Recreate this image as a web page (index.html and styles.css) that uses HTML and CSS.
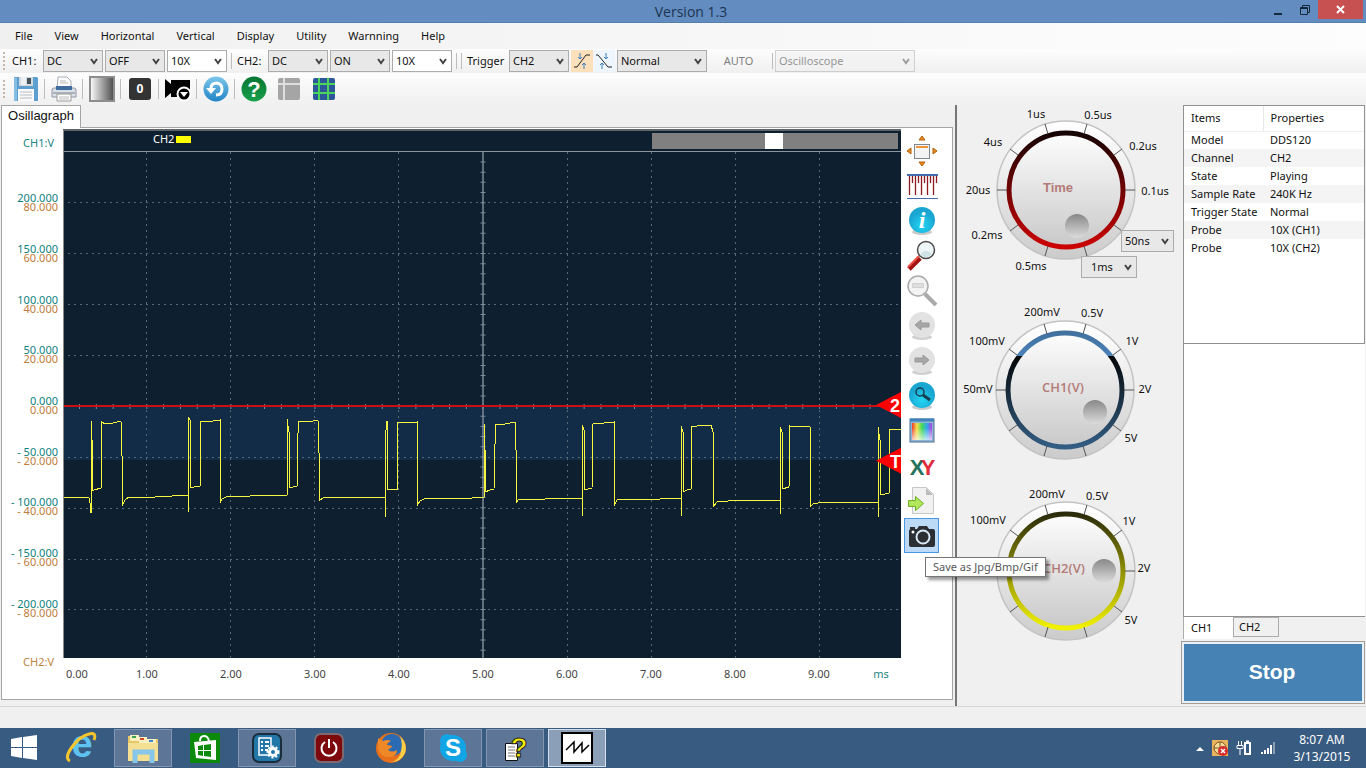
FILE: index.html
```html
<!DOCTYPE html>
<html lang="en">
<head>
    <meta charset="UTF-8">
    <meta name="viewport" content="width=device-width, initial-scale=1.0">
    <title>Version 1.3</title>
    <link rel="stylesheet" href="styles.css">
</head>
<body>
    <header class="titlebar">
        <h1>Version 1.3</h1>
        <div class="window-controls">
            <button aria-label="Minimize"><svg width="12" height="12"><path d="M2 10h8" stroke="#14283c" stroke-width="2"/></svg></button>
            <button aria-label="Restore"><svg width="12" height="12" fill="none" stroke="#14283c"><path d="M1.5 3.500h7v7h-7zM1 4.500h8M3.500 3V1.500h7v7H9"/></svg></button>
            <button class="close-btn" aria-label="Close"><svg width="10" height="10"><path d="M1 1l7 7M8 1l-7 7" stroke="#fff" stroke-width="2"/></svg></button>
        </div>
    </header>

    <nav class="menu">
        <button>File</button>
        <button>View</button>
        <button>Horizontal</button>
        <button>Vertical</button>
        <button>Display</button>
        <button>Utility</button>
        <button>Warnning</button>
        <button>Help</button>
    </nav>

    <div class="toolbar channel-bar">
        <span class="grip"></span>
        <label for="ch1-coupling">CH1:</label>
        <select id="ch1-coupling"><option>DC</option><option>AC</option></select>
        <select aria-label="CH1 state"><option>OFF</option><option>ON</option></select>
        <select class="editable" aria-label="CH1 probe"><option>10X</option><option>1X</option></select>
        <span class="sep"></span>
        <label for="ch2-coupling">CH2:</label>
        <select id="ch2-coupling"><option>DC</option><option>AC</option></select>
        <select aria-label="CH2 state"><option>ON</option><option>OFF</option></select>
        <select class="editable" aria-label="CH2 probe"><option>10X</option><option>1X</option></select>
        <span class="sep"></span>
        <span class="sep"></span>
        <label for="trigger">Trigger</label>
        <select id="trigger"><option>CH2</option><option>CH1</option></select>
        <div class="edges">
            <button class="edge active" aria-label="Rising edge">
                <svg width="18" height="18" fill="none"><path d="M1 15h3l9-12h4" stroke="#222"/><path d="M7 1v6M5 5l2 2 2-2M11 17v-6M9 13l2-2 2 2" stroke="#3d7dbd"/></svg>
            </button>
            <button class="edge" aria-label="Falling edge">
                <svg width="18" height="18" fill="none"><path d="M1 3h2l10 12h4" stroke="#222"/><path d="M11 1v6M9 5l2 2 2-2M7 17v-6M5 13l2-2 2 2" stroke="#3d7dbd"/></svg>
            </button>
        </div>
        <select class="medium" aria-label="Trigger mode"><option>Normal</option><option>Auto</option></select>
        <button class="auto-btn" disabled>AUTO</button>
        <span class="sep"></span>
        <select class="wide" aria-label="Device mode" disabled><option>Oscilloscope</option></select>
    </div>

    <div class="toolbar icon-bar">
        <span class="grip"></span>
        <button aria-label="Save">
            <svg width="26" height="26"><path d="M1 2q0-1 1-1h22l1 1v23H1z" fill="#5c9fd0"/><path d="M1 2h3v23H1z" fill="#86bde3"/><path d="M6 1h14v9H6z" fill="#d3dadf"/><path d="M8 1h5v8H8z" fill="#eef1f3"/><path d="M14 2h4v6h-4z" fill="#46525c"/><path d="M5 13h16v12H5z" fill="#fafafa"/><path d="M7 16h12M7 19h12M7 22h12" stroke="#b6bcc2"/></svg>
        </button>
        <span class="sep"></span>
        <button aria-label="Print">
            <svg width="26" height="26"><path d="M7 1h9l4 4v8H6z" fill="#fbfbfb" stroke="#a9b0b8"/><path d="M9 5h6M9 7h8" stroke="#bbb"/><path d="M1 14q0-2 2-2h20q2 0 2 2v7H1z" fill="#dadfe5" stroke="#8f98a3"/><path d="M5 10h16v4H5z" fill="#3f6d9d"/><path d="M2 17h22" stroke="#7d8794"/><path d="M6 18h14v7H6z" fill="#fff" stroke="#999"/><path d="M8 21h10M8 23h10" stroke="#bbb"/></svg>
        </button>
        <span class="sep"></span>
        <button aria-label="Intensity">
            <svg width="26" height="26"><defs><linearGradient id="gray"><stop offset="0" stop-color="#fff"/><stop offset="1" stop-color="#4a4a4a"/></linearGradient></defs><rect x="1" y="1" width="24" height="24" fill="url(#gray)" stroke="#8d8d8d" stroke-width="2"/></svg>
        </button>
        <span class="sep"></span>
        <button class="zero-btn"><span>0</span></button>
        <span class="sep"></span>
        <button aria-label="Record">
            <svg width="26" height="26"><path d="M0 3l6 5V4h19v17H6v-4l-6 5z" fill="#000"/><circle cx="19" cy="18" r="6.500" fill="#000" stroke="#fff" stroke-width="2"/><path d="M15 16h8l-4 5z" fill="#fff"/></svg>
        </button>
        <span class="sep"></span>
        <button aria-label="Undo">
            <svg width="26" height="26"><defs><linearGradient id="sky" x2="0" y2="1"><stop offset="0" stop-color="#7cc7ea"/><stop offset="1" stop-color="#2384c6"/></linearGradient></defs><circle cx="13" cy="13" r="12.500" fill="url(#sky)"/><path d="M8 12q0-5 6-5 5 1 5 6 0 6-6 6" fill="none" stroke="#fff" stroke-width="3"/><path d="M3 12h10l-5 6z" fill="#fff"/></svg>
        </button>
        <span class="sep"></span>
        <button aria-label="Help">
            <svg width="26" height="26"><defs><linearGradient id="green" x2="0" y2="1"><stop offset="0" stop-color="#087533"/><stop offset="1" stop-color="#18a04a"/></linearGradient></defs><circle cx="13" cy="13" r="12.500" fill="url(#green)"/><text class="glyph help" x="13" y="21">?</text></svg>
        </button>
        <button class="spaced" aria-label="Table">
            <svg width="26" height="26"><rect x="2" y="2" width="22" height="22" rx="2" fill="#a5a5a5"/><path d="M2 8h22M8 2v22" stroke="#dedede" stroke-width="2"/></svg>
        </button>
        <button class="spaced" aria-label="Grid">
            <svg width="26" height="26"><rect x="2" y="2" width="22" height="22" rx="2" fill="#2c5799"/><path d="M2 8h22M2 17h22M8 2v22M17 2v22" stroke="#4bd45a" stroke-width="2"/></svg>
        </button>
    </div>

    <main>
        <section class="scope">
            <div class="tabs"><button class="tab active">Osillagraph</button></div>
            <div class="pane">
                <div class="y-axis">
                    <span class="axis-name ch1">CH1:V</span>
                    <ul>
                        <li><span>200.000</span><span>80.000</span></li>
                        <li><span>150.000</span><span>60.000</span></li>
                        <li><span>100.000</span><span>40.000</span></li>
                        <li><span>50.000</span><span>20.000</span></li>
                        <li><span>0.000</span><span>0.000</span></li>
                        <li><span>- 50.000</span><span>- 20.000</span></li>
                        <li><span>- 100.000</span><span>- 40.000</span></li>
                        <li><span>- 150.000</span><span>- 60.000</span></li>
                        <li><span>- 200.000</span><span>- 80.000</span></li>
                    </ul>
                    <span class="axis-name ch2">CH2:V</span>
                </div>
                <div class="plot">
                    <div class="plot-head">
                        <span>CH2</span><i class="swatch"></i>
                        <div class="position"><div class="thumb"></div></div>
                    </div>
                    <div class="screen">
                        <svg viewBox="64 152 837 506" preserveAspectRatio="none">
                            <rect x="64" y="406" width="837" height="54" fill="#122b47"/>
                            <g stroke="#586876" stroke-dasharray="2 4" shape-rendering="crispEdges">
                                <path d="M68 202.500H901M68 253.500H901M68 304.500H901M68 355.500H901M68 457.500H901M68 508.500H901M68 559.500H901M68 609.500H901"/>
                                <path d="M146.500 152V658M230.500 152V658M314.500 152V658M398.500 152V658M567.500 152V658M651.500 152V658M735.500 152V658M819.500 152V658"/>
                            </g>
                            <!-- centre axes, the thick dashed strokes are the ticks -->
                            <g stroke="#7f8b96">
                                <path d="M483 152V658" stroke-width="1.500"/>
                                <path d="M483 161.500V658" stroke-width="5" stroke-dasharray="1 9.170"/>
                                <path d="M64 406.500H901"/>
                                <path d="M79 406.500H901" stroke-width="5" stroke-dasharray="1 15.820"/>
                            </g>
                            <rect x="64" y="405" width="837" height="2" fill="#cc0f16"/>
                            <path class="trace" d="M64 497L68 498 84 497 89 498 90 503 91 513 91 421 92 440 92 491 94 490 101 488 101 421 105 424 113 423 121 421 122 456 122 506 125 500 129 497 155 497 160 496 172 496 188 495 188 512 188 417 190 420 190 488 194 487 200 486 200 421 207 422 213 421 220 420 220 503 222 499 226 497 250 496 287 495 287 419 289 432 289 488 293 487 297 486 297 445 299 421 308 422 318 420 319 453 319 501 323 498 330 497 385 497 385 517 385 440 387 421 387 489 397 489 397 423 417 422 417 506 420 501 424 499 440 498 460 499 484 497 484 424 485 450 485 492 490 490 494 489 495 444 496 424 505 424 515 422 516 450 516 503 518 500 530 499 545 499 560 498 582 498 582 516 582 425 584 430 584 490 588 489 592 488 593 424 604 423 614 422 614 506 617 500 630 499 660 499 681 498 681 516 681 426 683 432 683 492 687 490 691 489 691 427 704 425 711 425 713 432 713 456 714 506 717 502 740 500 780 500 780 514 780 427 782 432 782 489 789 487 790 426 810 427 810 507 813 504 818 503 840 502 878 502 878 517 878 427 880 440 880 494 885 494 889 493 889 429 901 430"/>
                        </svg>
                        <div class="marker level"><span>2</span></div>
                        <div class="marker trigger"><span>T</span></div>
                    </div>
                </div>
                <div class="side-tools">
                    <button aria-label="Fit">
                        <svg width="32" height="32"><g fill="#e98a1c" stroke="#b4610a"><path d="M13 5l3-4 3 4zM13 27l3 4 3-4zM5 13l-4 3 4 3zM27 13l4 3-4 3z"/></g><rect x="8.500" y="9.500" width="15" height="14" fill="#f3f3f3" stroke="#7f8791"/><path d="M10 12h12" stroke="#ec9740" stroke-width="2"/></svg>
                    </button>
                    <button aria-label="Ruler">
                        <svg width="32" height="32"><path d="M1 5h31" stroke="#426daf" stroke-width="2"/><path d="M1 28.500h31" stroke="#426daf"/><path d="M3.500 6v19M9.500 6v19M15.500 6v19M21.500 6v19M27.500 6v19M6.500 6v7M12.500 6v7M18.500 6v7M24.500 6v7M30.500 6v7" stroke="#8c1a1f" stroke-width="1.300"/></svg>
                    </button>
                    <button aria-label="Info">
                        <svg width="32" height="32"><defs><radialGradient id="cyan" cy=".7"><stop offset="0" stop-color="#22d6f2"/><stop offset="1" stop-color="#1ba6d2"/></radialGradient></defs><ellipse cx="16" cy="27" rx="10" ry="3" fill="#c9c9c9"/><circle cx="16" cy="15" r="13" fill="url(#cyan)"/><text class="glyph info-i" x="16" y="23">i</text></svg>
                    </button>
                    <button aria-label="Zoom in">
                        <svg width="32" height="32"><path d="M3 29l11-11" stroke="#a31313" stroke-width="5"/><path d="M2 27l11-11" stroke="#ef5148" stroke-width="2"/><circle cx="20" cy="10" r="8.500" fill="#edf5f6" stroke="#4a4a4a" stroke-width="1.500"/><ellipse cx="20" cy="14" rx="5" ry="3" fill="#cfe3e6"/></svg>
                    </button>
                    <button aria-label="Zoom out" disabled>
                        <svg width="32" height="32"><path d="M19 19l11 11" stroke="#aaa" stroke-width="4"/><circle cx="12" cy="11" r="10" fill="#f3f3f3" stroke="#aaa" stroke-width="1.500"/><path d="M6.500 8.500h11v4h-11z" fill="#dedede" stroke="#d0d0d0"/></svg>
                    </button>
                    <button aria-label="Back" disabled>
                        <svg width="32" height="32"><ellipse cx="16" cy="27" rx="10" ry="3" fill="#d0d0d0"/><circle cx="16" cy="15" r="13" fill="#e2e2e2"/><path d="M9 15l6-5v3h8v4h-8v3z" fill="#a6a6a6" stroke="#999"/></svg>
                    </button>
                    <button aria-label="Forward" disabled>
                        <svg width="32" height="32"><ellipse cx="16" cy="27" rx="10" ry="3" fill="#d0d0d0"/><circle cx="16" cy="15" r="13" fill="#e2e2e2"/><path d="M23 15l-6-5v3H9v4h8v3z" fill="#a6a6a6" stroke="#999"/></svg>
                    </button>
                    <button aria-label="Search">
                        <svg width="32" height="32"><ellipse cx="16" cy="27" rx="10" ry="3" fill="#c9c9c9"/><circle cx="16" cy="15" r="13" fill="url(#cyan)"/><circle cx="14" cy="12" r="4" fill="none" stroke="#153f52" stroke-width="1.500"/><path d="M17 15l7 5" stroke="#153f52" stroke-width="3"/></svg>
                    </button>
                    <button aria-label="Colors">
                        <svg width="32" height="32"><defs><linearGradient id="hue"><stop offset="0" stop-color="#f03a2c"/><stop offset=".25" stop-color="#f3e34a"/><stop offset=".5" stop-color="#42d75c"/><stop offset=".75" stop-color="#2fa8ef"/><stop offset="1" stop-color="#b142dc"/></linearGradient><linearGradient id="glow" x2="0" y2="1"><stop offset=".3" stop-color="#fff" stop-opacity="0"/><stop offset="1" stop-color="#fff" stop-opacity=".7"/></linearGradient></defs><rect x="4" y="4" width="24" height="23" fill="#8fb4d6" stroke="#4e7292"/><path d="M4 5h24" stroke="#3f83bd" stroke-width="3"/><rect x="6" y="8" width="20" height="17" fill="url(#hue)"/><rect x="6" y="8" width="20" height="17" fill="url(#glow)"/></svg>
                    </button>
                    <button aria-label="XY mode">
                        <svg width="32" height="32"><text class="glyph xy" x="11" y="25" fill="#25735c">X</text><text class="glyph xy" x="22" y="25" fill="#e32c3b">Y</text></svg>
                    </button>
                    <button aria-label="Export">
                        <svg width="32" height="32"><path d="M6.500 2.500h14l7 7v19h-21z" fill="#f1f1f1" stroke="#c6c6c6"/><path d="M20 3l7 7h-7z" fill="#bbb"/><path d="M2.500 15.500h7v-4l8 7-8 7v-4h-7z" fill="#b3e65a" stroke="#6bb022"/></svg>
                    </button>
                    <button class="selected" aria-label="Screenshot">
                        <svg width="32" height="32"><path d="M5 9q-2 0-2 2v14q0 2 2 2h22q2 0 2-2V11q0-2-2-2h-4l-2-3h-8l-2 3z" fill="#2b2f33"/><path d="M4 7h5v2H4z" fill="#2b2f33"/><circle cx="17" cy="17" r="6.500" fill="#2b2f33" stroke="#d9e8f7" stroke-width="2"/><circle cx="7" cy="12" r="1.500" fill="#fff"/></svg>
                        <span class="tooltip">Save as Jpg/Bmp/Gif</span>
                    </button>
                </div>
                <ul class="x-axis">
                    <li>0.00</li>
                    <li>1.00</li>
                    <li>2.00</li>
                    <li>3.00</li>
                    <li>4.00</li>
                    <li>5.00</li>
                    <li>6.00</li>
                    <li>7.00</li>
                    <li>8.00</li>
                    <li>9.00</li>
                    <li class="unit">ms</li>
                </ul>
            </div>
        </section>

        <section class="dials">
            <div class="dial dial-time">
                <svg viewBox="0 0 224 180">
                    <defs>
                        <linearGradient id="rim" x2="0" y2="1"><stop offset="0" stop-color="#fff"/><stop offset=".3" stop-color="#f2f2f2"/><stop offset="1" stop-color="#cbcbcb"/></linearGradient>
                        <linearGradient id="face" x2="0" y2="1"><stop offset="0" stop-color="#fdfdfd"/><stop offset="1" stop-color="#c9c9c9"/></linearGradient>
                        <linearGradient id="dimple" x2="0" y2="1"><stop offset="0" stop-color="#888"/><stop offset="1" stop-color="#dcdcdc"/></linearGradient>
                        <linearGradient id="red" x2="0" y2="1"><stop offset="0" stop-color="#160404"/><stop offset="1" stop-color="#cc0202"/></linearGradient>
                        <linearGradient id="blue" x2="0" y2="1"><stop offset="0" stop-color="#41719f"/><stop offset=".2" stop-color="#4a81b8"/><stop offset=".2" stop-color="#050708"/><stop offset="1" stop-color="#335d83"/></linearGradient>
                        <linearGradient id="yellow" x2="0" y2="1"><stop offset="0" stop-color="#2b2b0c"/><stop offset="1" stop-color="#f2f200"/></linearGradient>
                        <g id="ticks" stroke="#555">
                            <path d="M59 0h10M-59 0h-10M48 35l8 6M-48 35l-8 6M48-35l8-6M-48-35l-8-6M18 56l3 10M-18 56l-3 10M18-56l3-10M-18-56l-3-10"/>
                        </g>
                    </defs>
                    <g transform="translate(109 85)">
                        <circle r="69" fill="url(#rim)" stroke="#c3c3c3" stroke-width="1.500"/>
                        <circle r="57" fill="url(#face)" stroke="url(#red)" stroke-width="5"/>
                        <use href="#ticks"/>
                        <circle cx="11" cy="36" r="12" fill="url(#dimple)"/>
                    </g>
                    <text class="dial-name" x="101" y="87">Time</text>
                    <text x="79" y="13">1us</text>
                    <text x="141" y="14">0.5us</text>
                    <text x="186" y="45">0.2us</text>
                    <text x="198" y="90">0.1us</text>
                    <text x="36" y="41">4us</text>
                    <text x="21" y="89">20us</text>
                    <text x="30" y="134">0.2ms</text>
                    <text x="74" y="165">0.5ms</text>
                </svg>
                <select class="fine" aria-label="Fast time base"><option>50ns</option></select>
                <select class="coarse" aria-label="Slow time base"><option>1ms</option></select>
            </div>
            <div class="dial">
                <svg viewBox="0 0 224 180">
                    <g transform="translate(108 85)">
                        <circle r="69" fill="url(#rim)" stroke="#c3c3c3" stroke-width="1.500"/>
                        <circle r="57" fill="url(#face)" stroke="url(#blue)" stroke-width="5"/>
                        <use href="#ticks"/>
                        <circle cx="30" cy="22" r="12" fill="url(#dimple)"/>
                    </g>
                    <text class="dial-name volts" x="106" y="87">CH1(V)</text>
                    <text x="85" y="11">200mV</text>
                    <text x="135" y="12">0.5V</text>
                    <text x="175" y="40">1V</text>
                    <text x="188" y="88">2V</text>
                    <text x="174" y="137">5V</text>
                    <text x="30" y="40">100mV</text>
                    <text x="21" y="88">50mV</text>
                </svg>
            </div>
            <div class="dial">
                <svg viewBox="0 0 224 180">
                    <g transform="translate(109 85)">
                        <circle r="69" fill="url(#rim)" stroke="#c3c3c3" stroke-width="1.500"/>
                        <circle r="57" fill="url(#face)" stroke="url(#yellow)" stroke-width="5"/>
                        <use href="#ticks"/>
                        <circle cx="38" cy="0" r="12" fill="url(#dimple)"/>
                    </g>
                    <text class="dial-name volts" x="107" y="87">CH2(V)</text>
                    <text x="90" y="12">200mV</text>
                    <text x="140" y="14">0.5V</text>
                    <text x="172" y="39">1V</text>
                    <text x="187" y="86">2V</text>
                    <text x="174" y="138">5V</text>
                    <text x="31" y="38">100mV</text>
                </svg>
            </div>
        </section>

        <aside class="info">
            <div class="props">
                <table>
                    <thead><tr><th>Items</th><th>Properties</th></tr></thead>
                    <tbody>
                        <tr><td>Model</td><td>DDS120</td></tr>
                        <tr><td>Channel</td><td>CH2</td></tr>
                        <tr><td>State</td><td>Playing</td></tr>
                        <tr><td>Sample Rate</td><td>240K Hz</td></tr>
                        <tr><td>Trigger State</td><td>Normal</td></tr>
                        <tr><td>Probe</td><td>10X (CH1)</td></tr>
                        <tr><td>Probe</td><td>10X (CH2)</td></tr>
                    </tbody>
                </table>
            </div>
            <div class="measure"></div>
            <div class="measure-tabs">
                <button class="active">CH1</button>
                <button>CH2</button>
            </div>
            <button class="stop-btn">Stop</button>
        </aside>
    </main>

    <div class="statusbar"></div>

    <footer class="taskbar">
        <button class="start" aria-label="Start">
            <svg width="28" height="28" fill="#fff"><path d="M1 5l11-2v10H1zM13 3l14-2v12H13zM1 14h11v10L1 22zM13 14h14v12l-14-2z"/></svg>
        </button>
        <button aria-label="Internet Explorer">
            <svg width="32" height="38"><text class="glyph ie" x="17" y="28">e</text><path d="M5 32q-6-3 2-14T24 5q8-2 5 6" fill="none" stroke="#f4c52c" stroke-width="3"/></svg>
        </button>
        <button class="open" aria-label="File Explorer">
            <svg width="34" height="32"><path d="M2 4h8l2 3h20v22H2z" fill="#e7c766"/><path d="M4 3h9v6H4zM13 5h8v6h-8zM21 7h9v6h-9z" fill="#fbf1c0"/><path d="M6 4h4v2H6z" fill="#3fa34d"/><path d="M14 6h4v2h-4z" fill="#d5472f"/><path d="M23 8h4v2h-4z" fill="#3f86cf"/><path d="M2 11h30v18H2z" fill="#f5df92"/><path d="M9 31V20h17v11" fill="none" stroke="#86c6e8" stroke-width="5"/></svg>
        </button>
        <button aria-label="Store">
            <svg width="32" height="32"><rect x="1" y="1" width="30" height="30" fill="#0b8a0b"/><path d="M5 10l22-2v20L7 26z" fill="#fff"/><path d="M11 9q0-5 4-5t5 5" fill="none" stroke="#fff" stroke-width="2"/><path d="M9 14l5-1v5H9zM15 13l7-1v6h-7zM9 19h5v5l-5-1zM15 19h7v6l-7-1z" fill="#0b8a0b"/></svg>
        </button>
        <button class="open" aria-label="Settings">
            <svg width="32" height="32"><rect x="2" y="2" width="28" height="28" rx="6" fill="#2277a8" stroke="#1b2d3c" stroke-width="2"/><path d="M8 6h12v17H8z" fill="none" stroke="#fff" stroke-width="1.500"/><path d="M10 10h2M14 10h4M10 14h2M14 14h4M10 18h2M14 18h3" stroke="#fff" stroke-width="2"/><circle cx="22" cy="20" r="3.500" fill="#2277a8" stroke="#fff" stroke-width="3"/><circle cx="22" cy="20" r="5.500" fill="none" stroke="#fff" stroke-width="2" stroke-dasharray="2 2"/></svg>
        </button>
        <button aria-label="Power">
            <svg width="32" height="32" fill="none"><rect x="2" y="2" width="28" height="28" rx="6" fill="#7d090d" stroke="#7d6a70" stroke-width="2"/><path d="M12 10a7.500 7.500 0 1 0 8 0M16 7v9" stroke="#fff" stroke-width="2"/></svg>
        </button>
        <button aria-label="Firefox">
            <svg width="32" height="32"><circle cx="16" cy="16" r="15" fill="#e8701b"/><circle cx="17" cy="13" r="11" fill="#2a6bb4"/><path d="M25 4q8 8 5 17-4 9-14 9 9-2 10-11 2-8-1-15z" fill="#f9cf4a"/><path d="M3 6l5 3q5-2 8 0-4 2-4 4 5 0 5 2-3 2-4 3 4 3 9 0 0 7-8 7Q5 25 3 16z" fill="#ef8826"/></svg>
        </button>
        <button class="open" aria-label="Skype">
            <svg width="32" height="32" fill="#12a5e5"><circle cx="16" cy="16" r="13"/><circle cx="10" cy="9" r="7"/><circle cx="23" cy="23" r="7"/><text class="glyph skype" x="16" y="24">S</text></svg>
        </button>
        <button class="open" aria-label="Help file">
            <svg width="32" height="36"><path d="M6.500 13.500h12v17h-12z" fill="#fff" stroke="#111"/><path d="M9 17h7M9 20h7M9 23h7M9 26h7" stroke="#777"/><text class="glyph question" x="20" y="27">?</text></svg>
        </button>
        <button class="open current" aria-label="Oscilloscope">
            <svg width="32" height="32"><rect x="1" y="1" width="30" height="30" fill="#fff" stroke="#000" stroke-width="2"/><path d="M5 18l8-8v10l8-9v9l7-7" fill="none" stroke="#000" stroke-width="1.500"/></svg>
        </button>

        <div class="tray">
            <svg width="8" height="5"><path d="M0 5l4-4 4 4z" fill="#fff"/></svg>
            <svg width="16" height="16"><rect width="16" height="16" fill="#e9b25e"/><circle cx="8" cy="8" r="6" fill="#f6dd9a" stroke="#7b5620"/><path d="M2 8h12M8 2v12" stroke="#7b5620"/><circle cx="11" cy="11" r="5" fill="#d52b2b"/><path d="M9 9l4 4M13 9l-4 4" stroke="#fff" stroke-width="1.500"/></svg>
            <svg width="16" height="16" fill="none" stroke="#fff"><path d="M2.500 1v4M5.500 1v4M1 5.500h6v3H1zM4 9v6"/><path d="M9 3h5v11H9zM10 1.500h3" stroke-width="2"/></svg>
            <svg width="16" height="16" fill="#fff"><path d="M1 12h2v2H1zM4 10h2v4H4zM7 8h2v6H7zM10 5h2v9h-2z"/><path d="M13 2h2v12h-2z" fill="#8a9cb0"/></svg>
            <div class="clock"><div>8:07 AM</div><div>3/13/2015</div></div>
        </div>
    </footer>
</body>
</html>
```
FILE: styles.css
```css
* {
    box-sizing: border-box;
}

body {
    margin: 0;
    height: 100vh;
    display: flex;
    flex-direction: column;
    background: #f0f0f0;
    color: #111;
    font-family: "Noto Sans", "Open Sans", sans-serif;
    font-size: 11px;
    line-height: 16px;
    overflow: hidden;
}

button, select {
    font: inherit;
    color: inherit;
    border: none;
    background: none;
    padding: 0;
}

svg {
    display: block;
}

ul {
    list-style: none;
    margin: 0;
    padding: 0;
}

/* letters inside icons */
.glyph {
    text-anchor: middle;
    font-family: "Liberation Sans", Arial, sans-serif;
    font-weight: bold;
}

.help {
    font-size: 22px;
    fill: #fff;
}

.info-i {
    font-family: "Liberation Serif", serif;
    font-size: 24px;
    font-style: italic;
    fill: #fff;
}

.xy {
    font-size: 22px;
}

.ie {
    font-size: 38px;
    fill: #5fc3f0;
}

.skype {
    font-size: 24px;
    fill: #fff;
}

.question {
    font-size: 28px;
    fill: #f5ee00;
    stroke: #222;
}

/* title bar */
.titlebar {
    display: grid;
    grid-template-columns: 1fr auto 1fr;
    height: 23px;
    background: #638dc0;
    border-bottom: 1px solid #5580ad;
}

.titlebar h1 {
    grid-column: 2;
    margin: 0;
    padding-left: 16px;
    font-family: "Open Sans", sans-serif;
    font-size: 14px;
    font-weight: normal;
    line-height: 24px;
    color: #1b3450;
}

.window-controls {
    display: flex;
    justify-content: flex-end;
    padding-right: 3px;
}

.window-controls button {
    width: 27px;
    height: 19px;
    display: flex;
    justify-content: center;
    align-items: center;
}

.window-controls .close-btn {
    width: 45px;
    background: #c75050;
}

/* menu */
.menu {
    display: flex;
    height: 26px;
    padding-left: 4px;
    background: linear-gradient(90deg, #f0f0f0, #fdfdfd);
}

.menu button {
    padding: 0 11px;
}

/* toolbars */
.toolbar {
    display: flex;
    align-items: center;
    background: linear-gradient(#fdfdfd, #f0f0f0);
}

.grip {
    width: 2px;
    height: 18px;
    margin-left: 3px;
    background: repeating-linear-gradient(#c3b8a8 0 2px, transparent 2px 4px);
}

.sep {
    width: 1px;
    height: 16px;
    background: #bdbdbd;
}

select {
    appearance: none;
    width: 60px;
    height: 22px;
    padding: 0 16px 0 3px;
    border: 1px solid #acacac;
    border-radius: 0;
    background: #e8e8e8 url("data:image/svg+xml,%3Csvg xmlns='http://www.w3.org/2000/svg' width='8' height='7'%3E%3Cpath d='M1 1l3 4 3-4' fill='none' stroke='%23444' stroke-width='2'/%3E%3C/svg%3E") no-repeat right 4px center;
}

select.editable {
    background-color: #fff;
}

select:disabled {
    color: #333;
    border-color: #aaa;
    background-color: #f0f0f0;
    opacity: 0.5;
}

select.medium {
    width: 90px;
}

select.wide {
    width: 140px;
}

.channel-bar {
    height: 24px;
    gap: 2px;
}

.channel-bar .grip {
    margin-right: 2px;
}

.channel-bar label {
    width: 29px;
    margin-left: 3px;
}

.channel-bar label[for="trigger"] {
    width: 40px;
}

.channel-bar .sep {
    margin-left: 2px;
}

.edges {
    display: flex;
}

.edge {
    width: 22px;
    height: 22px;
    display: flex;
    justify-content: center;
    align-items: center;
    background: #eef5fc;
}

.edge.active {
    background: #fcdfbb;
}

.auto-btn {
    width: 59px;
    color: #808080;
}

.icon-bar {
    height: 32px;
    padding-bottom: 1px;
}

.icon-bar .grip {
    margin-right: 8px;
}

.icon-bar .sep {
    height: 20px;
    margin: 0 6px 0 5px;
}

.icon-bar button {
    width: 26px;
    height: 26px;
}

.icon-bar .spaced {
    margin-left: 9px;
}

.zero-btn span {
    display: block;
    width: 22px;
    margin: 0 auto;
    border-radius: 3px;
    background: #333;
    color: #fff;
    font-size: 12px;
    font-weight: bold;
    line-height: 22px;
}

/* main area */
main {
    flex: 1;
    display: flex;
    min-height: 0;
}

.scope {
    flex: 1;
    display: flex;
    flex-direction: column;
    min-width: 0;
    padding: 0 2px 6px 1px;
    border-right: 2px solid #767676;
}

.tabs {
    display: flex;
    height: 22px;
}

.tab {
    width: 80px;
    height: 23px;
    padding-bottom: 2px;
    z-index: 1;
    border: 1px solid #a5a5a5;
    border-bottom: none;
    background: #fff;
    font-family: "Liberation Sans", Arial, sans-serif;
    font-size: 13px;
}

.pane {
    flex: 1;
    display: grid;
    grid-template-columns: 61px 1fr 51px;
    grid-template-rows: 1fr 41px;
    min-height: 0;
    padding-top: 1px;
    border: 1px solid #a5a5a5;
    background: #fff;
}

.y-axis {
    grid-row: 1 / 3;
    display: flex;
    flex-direction: column;
    text-align: right;
    padding: 6px 5px 29px 0;
}

.y-axis ul {
    flex: 1;
    display: flex;
    flex-direction: column;
    padding: 26px 0 21px;
}

.y-axis li {
    flex: 1;
    display: flex;
    flex-direction: column;
    justify-content: center;
    line-height: 9px;
    color: #c07c3c;
    white-space: nowrap;
}

.y-axis li span:first-child {
    color: #0d7f80;
}

.axis-name {
    padding-right: 4px;
}

.ch1 {
    color: #1c8484;
}

.ch2 {
    color: #b98540;
}

.plot {
    display: flex;
    flex-direction: column;
    min-width: 0;
    min-height: 0;
    border-top: 2px solid #5f6468;
    border-left: 1px solid #8b8b8b;
    background: #0e2030;
}

.plot-head {
    display: flex;
    align-items: center;
    height: 21px;
    padding: 0 3px 0 89px;
    border-bottom: 1px solid #8d969d;
    color: #fff;
    line-height: 12px;
}

.plot-head > span {
    padding-bottom: 4px;
}

.swatch {
    width: 15px;
    height: 7px;
    margin: 0 0 4px 2px;
    background: #ff0;
}

.position {
    width: 246px;
    height: 16px;
    margin-left: auto;
    padding-left: 113px;
    background: #808080;
}

.thumb {
    width: 18px;
    height: 16px;
    background: #fff;
}

.screen {
    flex: 1;
    min-height: 0;
    position: relative;
}

.screen svg {
    width: 100%;
    height: 100%;
}

.trace {
    fill: none;
    stroke: #f5f542;
    shape-rendering: crispEdges;
}

.marker {
    position: absolute;
    right: 0;
    width: 25px;
    height: 26px;
    margin-top: -13px;
    padding-left: 14px;
    background: #f00;
    clip-path: polygon(0 50%, 100% 0, 100% 100%);
    color: #fff;
    font-family: "Liberation Sans", Arial, sans-serif;
    font-size: 18px;
    font-weight: bold;
    line-height: 28px;
}

.marker.level {
    top: 50%;
}

.marker.trigger {
    top: 61%;
}

.x-axis {
    grid-column: 2;
    display: grid;
    grid-template-columns: 42fr repeat(9, 84fr) 40fr;
    padding-top: 8px;
    text-align: center;
    color: #444;
}

.x-axis li:first-child {
    text-align: left;
    padding-left: 3px;
}

.x-axis .unit {
    color: #1c8484;
}

.side-tools {
    grid-row: 1 / 3;
    grid-column: 3;
    display: flex;
    flex-direction: column;
    padding: 4px 0 0 3px;
}

.side-tools button {
    position: relative;
    display: flex;
    justify-content: center;
    align-items: center;
    width: 35px;
    height: 35px;
}

.side-tools .selected {
    border: 1px solid #4a97e4;
    background: #bcd9f5;
}

.tooltip {
    position: absolute;
    top: 38px;
    left: 20px;
    z-index: 2;
    padding: 1px 7px;
    border: 1px solid #767676;
    background: #fff;
    box-shadow: 3px 3px 3px rgba(0, 0, 0, 0.4);
    color: #575757;
    white-space: nowrap;
}

/* dials */
.dials {
    display: flex;
    flex-direction: column;
    gap: 1px;
    width: 224px;
}

.dial {
    position: relative;
    height: 180px;
}

.dial-time {
    margin-bottom: 19px;
}

.dial text {
    text-anchor: middle;
    fill: #111;
}

.dial .dial-name {
    font-family: "Liberation Sans", Arial, sans-serif;
    font-size: 13px;
    font-weight: bold;
    fill: #b37b78;
}

.dial .volts {
    font-family: "Open Sans", sans-serif;
    font-weight: 600;
}

.dial .fine {
    position: absolute;
    top: 125px;
    left: 164px;
    width: 53px;
}

.dial .coarse {
    position: absolute;
    top: 151px;
    left: 124px;
    width: 56px;
    padding-left: 9px;
}

/* right column */
.info {
    display: flex;
    flex-direction: column;
    width: 185px;
    padding: 0 1px 2px 0;
}

.props {
    height: 239px;
    margin-left: 2px;
    border: 1px solid #919191;
    background: #fff;
}

.props table {
    width: 100%;
    border-collapse: collapse;
    table-layout: fixed;
}

.props th, .props td {
    height: 18px;
    padding: 0 0 0 7px;
    text-align: left;
    font-weight: normal;
    white-space: nowrap;
}

.props th {
    height: 25px;
    border-bottom: 1px solid #eee;
}

.props th:first-child {
    width: 79px;
    border-right: 1px solid #e8e8e8;
}

.props tbody tr:nth-child(even) {
    background: #f4f4f4;
}

.measure {
    flex: 1;
    margin-left: 2px;
    border: solid #919191;
    border-width: 0 0 1px 1px;
    background: #fff;
}

.measure-tabs {
    display: flex;
    align-items: flex-start;
    height: 24px;
    margin-left: 2px;
}

.measure-tabs button {
    width: 46px;
    height: 20px;
    padding-left: 5px;
    text-align: left;
    border: 1px solid #acacac;
}

.measure-tabs .active {
    width: 50px;
    height: 22px;
    padding-left: 7px;
    border-width: 0 0 0 1px;
    background: #fff;
}

.stop-btn {
    height: 63px;
    padding: 0 2px 2px 0;
    border: 1px solid #a39b94;
    background: #4682b4;
    box-shadow: inset 0 0 0 2px #e9f1f8;
    color: #fff;
    font-family: "Liberation Sans", Arial, sans-serif;
    font-size: 21px;
    font-weight: bold;
}

.statusbar {
    height: 22px;
    border-top: 1px solid #d7d7d7;
}

/* taskbar */
.taskbar {
    display: flex;
    gap: 4px;
    height: 40px;
    background: #385b82;
}

.taskbar button {
    display: flex;
    justify-content: center;
    align-items: center;
    width: 58px;
    height: 38px;
    margin-top: 1px;
}

.taskbar .start {
    width: 48px;
}

.taskbar .open {
    border: 1px solid #8496b0;
    background: #5d7596;
}

.taskbar .current {
    border-color: #d5dfea;
    background: #8b9fb9;
}

.tray {
    display: flex;
    align-items: center;
    gap: 8px;
    margin-left: auto;
    padding-right: 14px;
    color: #fff;
}

.clock {
    width: 60px;
    margin-left: 8px;
    text-align: center;
    font-size: 12px;
    line-height: 17px;
}
```
